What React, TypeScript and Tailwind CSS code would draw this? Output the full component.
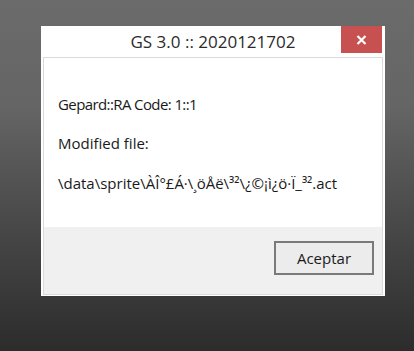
import React from "react";

export default function App() {
  return (
    <div
      className="w-[414px] h-[351px] pt-[26px] pl-[41px] bg-[linear-gradient(180deg,#6b6b6b_0%,#656565_30%,#4a4a4a_62%,#2c2c2c_100%)]"
      style={{ fontFamily: '"Open Sans", "Noto Sans", sans-serif' }}
    >
      <div className="w-[344px] h-[270px] bg-white flex flex-col px-[2px] pb-[1px]">
        <div className="relative h-[31px] shrink-0 flex items-center justify-center">
          <span className="text-[17px] leading-[20px] text-[#2b2b2b]">GS 3.0 :: 2020121702</span>
          <div className="absolute top-0 right-[1px] w-[41px] h-[27px] bg-[#c75050] flex items-center justify-center">
            <svg width="11" height="10" viewBox="0 0 11 10">
              <path d="M1.5 1 L9.5 9 M9.5 1 L1.5 9" stroke="#ffffff" strokeWidth="2.2" strokeLinecap="butt" />
            </svg>
          </div>
        </div>
        <div className="flex-1 flex flex-col border border-[#dadada]">
          <div className="h-[169px] shrink-0 bg-white pl-[14px] pt-[36px] text-[15px] leading-[20px] text-[#1a1a1a]">
            <div className="tracking-[-0.6px]">Gepard::RA Code: 1::1</div>
            <div className="mt-[19px]">Modified file:</div>
            <div className="mt-[20px]">\data\sprite\ÀÎ°£Á·\¸öÅë\³²\¿©¡ì¿ö·Ï_³².act</div>
          </div>
          <div className="flex-1 bg-[#f0f0f0] flex justify-end items-start pt-[14px] pr-[8px]">
            <div className="w-[100px] h-[34px] border-2 border-[#7a7a7a] bg-[#ececec] flex items-center justify-center text-[15px] text-[#1a1a1a] leading-[20px]">
              Aceptar
            </div>
          </div>
        </div>
      </div>
    </div>
  );
}
